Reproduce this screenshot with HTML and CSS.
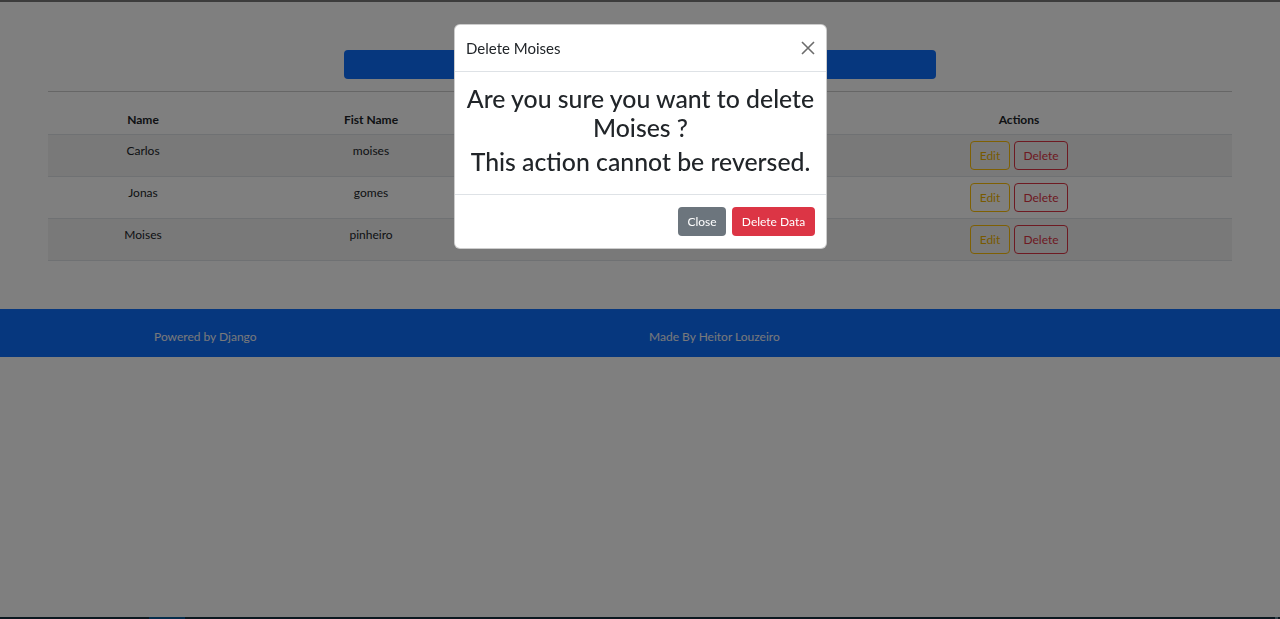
FILE: index.html
```html
<!DOCTYPE html>
<html lang="en">
<head>
<meta charset="utf-8">
<title>Records</title>
<link rel="stylesheet" href="styles.css">
</head>
<body>
<div class="page">
  <main class="content">
    <div class="toolbar">
      <button class="btn-add" type="button"></button>
    </div>
    <hr class="divider">
    <table class="records">
      <colgroup>
        <col class="c-name"><col class="c-first"><col class="c-last"><col class="c-email"><col class="c-actions">
      </colgroup>
      <thead>
        <tr><th>Name</th><th>Fist Name</th><th></th><th></th><th>Actions</th></tr>
      </thead>
      <tbody>
        <tr class="striped">
          <td>Carlos</td><td>moises</td><td></td><td></td>
          <td><button class="btn-edit" type="button">Edit</button><button class="btn-del" type="button">Delete</button></td>
        </tr>
        <tr>
          <td>Jonas</td><td>gomes</td><td></td><td></td>
          <td><button class="btn-edit" type="button">Edit</button><button class="btn-del" type="button">Delete</button></td>
        </tr>
        <tr class="striped">
          <td>Moises</td><td>pinheiro</td><td></td><td></td>
          <td><button class="btn-edit" type="button">Edit</button><button class="btn-del" type="button">Delete</button></td>
        </tr>
      </tbody>
    </table>
  </main>
  <footer class="site-footer">
    <span>Powered by Django</span>
    <span>Made By Heitor Louzeiro</span>
  </footer>
</div>

<div class="backdrop"></div>

<div class="modal">
  <div class="modal-header">
    <h5 class="modal-title">Delete Moises</h5>
    <button class="btn-close" type="button" aria-label="Close">
      <svg width="14" height="14" viewBox="0 0 14 14"><path d="M1 1 L13 13 M13 1 L1 13" stroke="#6c6c6c" stroke-width="1.6" fill="none"/></svg>
    </button>
  </div>
  <div class="modal-body">
    <h2 class="confirm">Are you sure you want to delete Moises ?</h2>
    <h2 class="confirm">This action cannot be reversed.</h2>
  </div>
  <div class="modal-footer">
    <button class="btn-secondary" type="button">Close</button>
    <button class="btn-danger" type="button">Delete Data</button>
  </div>
</div>

<div class="taskbar"><span class="tb-left"></span><span class="tb-active"></span><span class="tb-fill"></span><span class="tb-end"></span></div>
</body>
</html>
```

FILE: styles.css
```css
* { box-sizing: border-box; }
html, body { margin: 0; padding: 0; }
body {
  font-family: "Segoe UI", Lato, "Noto Sans", sans-serif;
  font-size: 12px;
  line-height: 18px;
  color: #212529;
  background: #ffffff;
  min-height: 100vh;
  display: flex;
  flex-direction: column;
}
.page {
  flex: 1;
  border-top: 2px solid #787878;
}
.content {
  padding: 48px 48px 0;
}
.toolbar {
  display: flex;
  justify-content: center;
}
.btn-add {
  width: 592px;
  height: 29px;
  border: none;
  border-radius: 4px;
  background: #0d6efd;
}
.divider {
  border: none;
  border-top: 1px solid rgba(0,0,0,.2);
  margin: 12px 0;
  height: 0;
}
.records {
  width: 1184px;
  border-collapse: collapse;
  table-layout: fixed;
  text-align: center;
}
.c-name { width: 190px; }
.c-first { width: 266px; }
.c-last { width: 151px; }
.c-email { width: 151px; }
.c-actions { width: 426px; }
.records th {
  font-weight: 700;
  padding: 7px 6px 5px;
  vertical-align: bottom;
  border-bottom: 1px solid #dee2e6;
}
.records td {
  padding: 6px;
  vertical-align: top;
  border-bottom: 1px solid #dee2e6;
}
.records tr.striped td { background: rgba(0,0,0,.05); }
.records td:first-child, .records td:nth-child(2) { padding-top: 7px; }
.btn-edit, .btn-del {
  font-family: inherit;
  font-size: 12px;
  line-height: 18px;
  padding: 4.5px 0;
  background: transparent;
  border-radius: 4px;
  height: 29px;
  white-space: nowrap;
}
.btn-edit { color: #f0b400; border: 1px solid #ffc107; width: 40px; }
.btn-del { color: #dc3545; border: 1px solid #dc3545; width: 54px; margin-left: 4px; }
.site-footer {
  margin-top: 48px;
  background: #0d6efd;
  color: #f0f2f6;
  height: 48px;
  display: grid;
  grid-template-columns: 495px auto;
  align-items: center;
  padding-left: 154px;
  padding-top: 8px;
}
.backdrop {
  position: fixed;
  inset: 0;
  background: rgba(0,0,0,.5);
}
.modal {
  position: fixed;
  top: 24px;
  left: 454px;
  width: 373px;
  background: #ffffff;
  border-radius: 6px;
  border: 1px solid rgba(0,0,0,.2);
  overflow: hidden;
}
.modal-header {
  display: flex;
  align-items: center;
  justify-content: space-between;
  padding: 12px 11px 12px 11px;
  height: 47px;
  border-bottom: 1px solid #dee2e6;
}
.modal-title {
  margin: 0;
  font-size: 15px;
  font-weight: 400;
  line-height: 22px;
}
.btn-close {
  border: none;
  background: transparent;
  padding: 0;
  width: 14px;
  height: 14px;
  display: flex;
}
.modal-body {
  padding: 13px 4px 13px;
  text-align: center;
}
.confirm {
  margin: 0 0 5px;
  font-size: 24.8px;
  font-weight: 500;
  line-height: 28.8px;
}
.modal-footer {
  border-top: 1px solid #dee2e6;
  display: flex;
  justify-content: flex-end;
  gap: 6px;
  padding: 12px 11px 12px;
}
.btn-secondary, .btn-danger {
  font-family: inherit;
  font-size: 12px;
  line-height: 18px;
  height: 29px;
  padding: 4.5px 0;
  border: none;
  border-radius: 4px;
  color: #fff;
  white-space: nowrap;
}
.btn-secondary { background: #6c757d; width: 48px; }
.btn-danger { background: #dc3545; width: 83px; }
.taskbar {
  display: flex;
  height: 2px;
  background: #17303f;
}
.tb-left { width: 149px; }
.tb-active { width: 36px; background: #0b5a96; }
.tb-fill { flex: 1; }
.tb-end { width: 3px; background: #6b8a9a; margin-right: 2px; }
```
